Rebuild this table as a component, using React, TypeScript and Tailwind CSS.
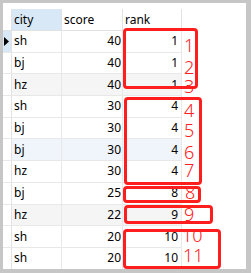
import React from "react";

type Row = { city: string; score: number; rank: number; bg?: string };

const rows: Row[] = [
  { city: "sh", score: 40, rank: 1 },
  { city: "bj", score: 40, rank: 1 },
  { city: "hz", score: 40, rank: 1, bg: "bg-[#f5f5f5]" },
  { city: "sh", score: 30, rank: 4 },
  { city: "bj", score: 30, rank: 4 },
  { city: "bj", score: 30, rank: 4, bg: "bg-[#eff5fb]" },
  { city: "hz", score: 30, rank: 4 },
  { city: "bj", score: 25, rank: 8 },
  { city: "hz", score: 22, rank: 9, bg: "bg-[#f5f5f5]" },
  { city: "sh", score: 20, rank: 10 },
  { city: "sh", score: 20, rank: 10 },
];

// red annotation boxes drawn over the grid
const boxes = [
  "left-[120px] top-[25px] w-[75px] h-[61px]",
  "left-[121px] top-[94px] w-[78px] h-[88px]",
  "left-[120px] top-[183px] w-[78px] h-[17px]",
  "left-[121px] top-[202px] w-[89px] h-[19px]",
  "left-[120px] top-[226px] w-[98px] h-[40px]",
];

const marks = [
  { n: "1", cls: "left-[181px] top-[36px]" },
  { n: "2", cls: "left-[181px] top-[58px]" },
  { n: "3", cls: "left-[181px] top-[77px]" },
  { n: "4", cls: "left-[181px] top-[101px]" },
  { n: "5", cls: "left-[181px] top-[121px]" },
  { n: "6", cls: "left-[181px] top-[143px]" },
  { n: "7", cls: "left-[181px] top-[161px]" },
  { n: "8", cls: "left-[182px] top-[183px]" },
  { n: "9", cls: "left-[181px] top-[205px]" },
  { n: "10", cls: "left-[179px] top-[226px]" },
  { n: "11", cls: "left-[180px] top-[246px]" },
];

export default function App() {
  return (
    <div className="w-[251px] h-[273px] bg-[#c6c6c6] pt-[3px] pl-[3px] pr-[5px] pb-[4px] overflow-hidden">
      <div
        className="relative w-[243px] h-[266px] bg-white overflow-hidden text-[12px] text-black"
        style={{ fontFamily: '"Noto Sans", "Liberation Sans", sans-serif' }}
      >
        <div className="h-[6px]" />
        {/* header */}
        <div className="flex h-[22px] border-b border-[#e2e2e2] w-[179px]">
          <div className="w-[9px] border-r border-[#e2e2e2]" />
          <div className="w-[50px] border-r border-[#e2e2e2] bg-[#d9e8f7] pl-[2px] flex items-center">city</div>
          <div className="w-[61px] border-r border-[#e2e2e2] pl-[2px] flex items-center">score</div>
          <div className="w-[59px] border-r border-[#e2e2e2] pl-[2px] flex items-center">rank</div>
        </div>
        {rows.map((r, i) => (
          <div key={i} className="flex h-[21.7px] border-b border-[#e8e8e8] w-[179px]">
            <div
              className={
                "w-[9px] border-r border-[#e2e2e2] flex items-center " +
                (i === 0 ? "bg-[#d9e8f7]" : "")
              }
            >
              {i === 0 && (
                <svg width="5" height="9" viewBox="0 0 5 9" className="ml-[1px]">
                  <polygon points="0,0 5,4.5 0,9" fill="#000" />
                </svg>
              )}
            </div>
            <div className={"flex flex-1 " + (r.bg ?? "")}>
              <div className="w-[50px] border-r border-[#e8e8e8] pl-[2px] flex items-center">{r.city}</div>
              <div className="w-[61px] border-r border-[#e8e8e8] pr-[1px] flex items-center justify-end">{r.score}</div>
              <div className="w-[59px] border-r border-[#e8e8e8] pr-[3px] flex items-center justify-end">{r.rank}</div>
            </div>
          </div>
        ))}

        {/* red annotations */}
        {boxes.map((b, i) => (
          <div key={i} className={"absolute border-[3px] border-[#ff1e1e] rounded-[4px] " + b} />
        ))}
        {marks.map((m) => (
          <div
            key={m.n}
            className={"absolute text-[18px] leading-[13px] font-light text-[#ff2020] " + m.cls}
            style={{ fontFamily: '"Noto Sans", "Liberation Sans", sans-serif' }}
          >
            {m.n}
          </div>
        ))}
      </div>
    </div>
  );
}
